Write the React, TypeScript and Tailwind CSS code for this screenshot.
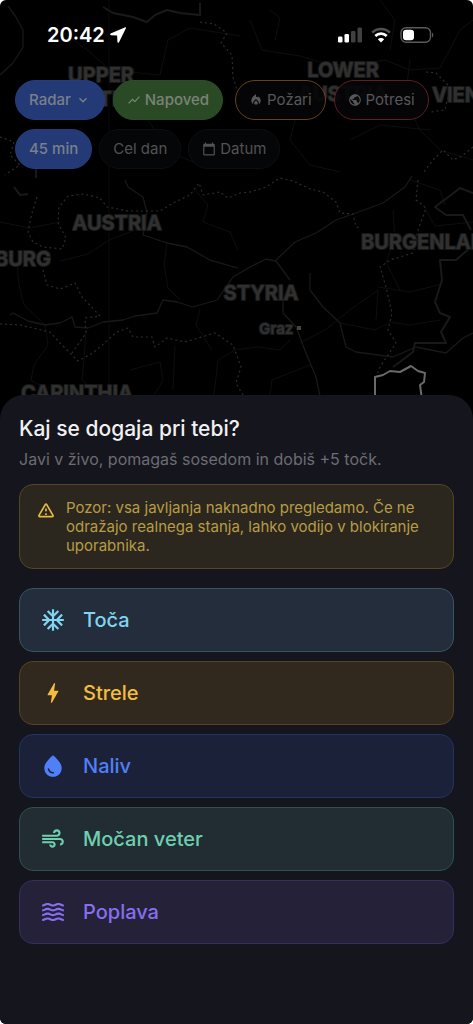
import React from "react";
import {
  MdAcUnit,
  MdAir,
  MdBolt,
  MdCalendarToday,
  MdKeyboardArrowDown,
  MdLocalFireDepartment,
  MdPublic,
  MdShowChart,
  MdWaterDrop,
  MdWaves,
} from "react-icons/md";

const reports = [
  {
    label: "Toča",
    icon: MdAcUnit,
    style: "bg-[#242d3b] border-[#35565f] text-[#81d4f0]",
  },
  {
    label: "Strele",
    icon: MdBolt,
    style: "bg-[#32291e] border-[#54431f] text-[#f3bd42]",
  },
  {
    label: "Naliv",
    icon: MdWaterDrop,
    style: "bg-[#1c213a] border-[#243361] text-[#4f80f7]",
  },
  {
    label: "Močan veter",
    icon: MdAir,
    style: "bg-[#212d33] border-[#2d5150] text-[#6fcfb0]",
  },
  {
    label: "Poplava",
    icon: MdWaves,
    style: "bg-[#252138] border-[#352f5c] text-[#866ff0]",
  },
];

const roads = [
  "M10 315L13 313L28 321L45 325L60 323L72 317L75 327L88 328L103 322L123 320L135 316L157 313L163 300L177 302L193 307L217 300L233 277L250 267L266 259L276 261L290 280",
  "M125 180L128 187L143 197L147 213L143 235L167 243L187 247L210 260L238 268",
  "M276 260L295 242L316 233L336 220L356 213L383 203L405 187L412 176",
  "M310 273L310 290L323 307L340 323L346 347L356 352L393 357L416 347L446 353L463 338L473 333",
  "M283 297L283 313L296 327L306 353L316 377L320 396",
  "M0 75L13 63L23 47L23 30L16 17L8 6",
];

const lanes = [
  "M17 265L19 285L24 305L45 325L48 345L34 365L31 380L45 388",
  "M60 261L88 254L109 240L140 228",
  "M0 222L30 228L60 222",
  "M167 243L164 265L168 288L180 300",
  "M203 222L230 232L238 250M203 222L208 205L195 190",
  "M86 330L84 360L82 380L95 392M130 370L160 362L163 380L154 396",
  "M340 323L375 330L390 322L410 325L440 320",
  "M300 343L325 330L350 310L378 290L376 320M378 287L410 292L442 284",
  "M393 210L395 240L386 262L400 290M425 208L435 226L473 222",
  "M233 350L258 347L280 350L290 340M270 395L272 380L310 365",
  "M60 30L90 52L110 70L160 75L168 40L190 28L240 36",
  "M250 20L262 50L300 56L320 62L350 66L385 60L410 70L440 68L460 30L473 20",
  "M410 60L405 100L420 130L440 150L473 160M350 140L380 125L430 130",
  "M120 100L150 122L165 150L200 165M300 100L290 140L310 165L340 172",
  "M270 10L280 18L275 40M380 0L395 20L390 50M410 180L440 190L445 205",
  "M214 395L218 360L235 350M175 345L173 390M200 309L196 325L212 350",
];

const regionBorders = [
  "M37 197L32 213L28 232L33 242L43 247L62 249L66 238L58 223L59 207L68 196L83 194L100 198L107 207L128 211L160 211L173 203L190 195L199 183L203 195L220 192L228 198L240 193L250 192L266 187L280 178L293 181L310 189L323 192L336 202L340 213L353 214L356 227L361 228",
  "M43 270L47 285L60 289L75 283L82 297L100 316L85 318L86 333L72 353",
  "M0 324L20 325L50 332L60 343L78 361L93 353L117 332L128 328L133 337L152 337L155 347L167 338L185 342L215 333L233 345L241 367L236 383L243 395",
  "M418 180L416 200L426 208L418 230L413 253L390 260L380 267L386 287L392 313L388 330L396 343L380 367L376 377",
  "M200 22L214 24L227 33L221 43L232 55L233 77L237 90",
  "M426 72L436 73L450 87L445 110L430 112",
  "M473 147L462 156L453 160L443 150L433 160L423 173",
  "M0 137L14 142L10 155L20 165L5 175",
];

const stateBorders = [
  "M103 7L113 13L133 17L147 22L155 15L167 10L180 13L200 15L200 3",
  "M473 193L460 188L451 195L435 207L446 215L463 215L471 230",
  "M471 247L456 260L440 260L442 280L435 302L440 313L450 317L441 332L446 343L415 343L413 352L393 367",
  "M14 187L20 195L28 194M24 160L36 165L36 178",
];

const Map = () => {
  return (
    <svg
      className="absolute top-0 left-0 w-full"
      viewBox="0 0 473 420"
      fill="none"
      strokeLinejoin="round"
      aria-hidden="true"
    >
      <path d="M109 0V420" stroke="#0b0b0b" />
      <g stroke="#0e0e0e">
        {lanes.map((d) => (
          <path key={d} d={d} />
        ))}
      </g>
      <g stroke="#181818" strokeWidth="1.3">
        {roads.map((d) => (
          <path key={d} d={d} />
        ))}
      </g>
      <g stroke="#2c2c2c" strokeWidth="1.2" strokeDasharray="2 3">
        {regionBorders.map((d) => (
          <path key={d} d={d} />
        ))}
      </g>
      <g stroke="#191919" strokeWidth="2">
        {stateBorders.map((d) => (
          <path key={d} d={d} />
        ))}
      </g>
      <path
        d="M375 400V377L383 375L390 371L400 372L411 366L418 371L425 373L424 382L420 385L422 400"
        stroke="#6a6a6a"
        strokeWidth="2"
      />
      <g
        className="font-['Inter',sans-serif] text-[20px] font-bold"
        fill="#303030"
        stroke="#181818"
        strokeWidth="2"
        paintOrder="stroke"
      >
        <text x="101" y="82" textAnchor="middle">UPPER</text>
        <text x="101" y="106" textAnchor="middle">AUSTRIA</text>
        <text x="343" y="77" textAnchor="middle">LOWER</text>
        <text x="343" y="101" textAnchor="middle">AUSTRIA</text>
        <text x="432" y="102">VIENNA</text>
        <text x="117" y="230" textAnchor="middle">AUSTRIA</text>
        <text x="51" y="266" textAnchor="end">SALZBURG</text>
        <text x="361" y="249">BURGENLAND</text>
        <text x="261" y="300" textAnchor="middle">STYRIA</text>
        <text x="77" y="400" textAnchor="middle">CARINTHIA</text>
        <text x="259" y="334" className="text-[15px]">Graz</text>
      </g>
      <rect x="297" y="326" width="4" height="4" fill="#444444" />
    </svg>
  );
};

const StatusBar = () => {
  return (
    <div className="flex h-[70px] items-center justify-between pr-[39px] pl-[47px] text-white">
      <div className="flex items-center gap-1">
        <span className="text-xl leading-6 font-semibold">20:42</span>
        <svg className="size-[18px]" viewBox="0 0 18 18" fill="currentColor">
          <path d="M16.4 1.2 1.6 7.6c-.8.4-.6 1.5.3 1.6l6.2.3.3 6.4c.1.9 1.2 1.1 1.6.3l7-14.3c.2-.5-.2-.9-.6-.7Z" />
        </svg>
      </div>
      <div className="flex items-center gap-[9px]">
        <svg className="h-4 w-6" viewBox="0 0 24 16">
          <rect x="0" y="9.5" width="4.5" height="6" rx="1.3" fill="#fff" />
          <rect x="6.5" y="7" width="4.5" height="8.5" rx="1.3" fill="#fff" />
          <rect x="13" y="4" width="4.5" height="11.5" rx="1.3" fill="#404040" />
          <rect x="19.5" y="0.5" width="4.5" height="15" rx="1.3" fill="#404040" />
        </svg>
        <svg className="h-4 w-5" viewBox="0 0 20 16" fill="none" strokeWidth="2.6">
          <path d="M1.2 5.6a12.4 12.4 0 0 1 17.6 0" stroke="#505050" />
          <path d="M4.3 9a8 8 0 0 1 11.4 0" stroke="#fff" />
          <path d="M10 15.6 6.8 12.3a4.6 4.6 0 0 1 6.4 0Z" fill="#fff" />
        </svg>
        <svg className="h-4 w-[34px]" viewBox="0 0 34 16" fill="none">
          <rect x="1" y="0.7" width="29.5" height="14.6" rx="5" stroke="#5a5a5a" strokeWidth="1.4" />
          <rect x="3" y="2.7" width="11" height="10.6" rx="3.2" fill="#fff" />
          <path d="M32 5.5c1.7.8 1.7 4.2 0 5Z" fill="#5a5a5a" />
        </svg>
      </div>
    </div>
  );
};

const chip =
  "flex h-10 shrink-0 items-center gap-1 rounded-full border px-[13px] text-[15px] leading-5 whitespace-nowrap";

const Filters = () => {
  return (
    <div className="flex flex-col gap-[9px] overflow-hidden pt-[10px] pl-[15px]">
      <div className="flex gap-2">
        <button type="button" className={`${chip} border-[#253c7c] bg-[#243a76] font-medium text-[#7a7f8b]`}>
          Radar
          <MdKeyboardArrowDown className="size-4" />
        </button>
        <button type="button" className={`${chip} border-[#2b4f26] bg-[#2a4a25] font-medium text-[#7b8279]`}>
          <MdShowChart className="size-[14px]" />
          Napoved
        </button>
        <button type="button" className={`${chip} ml-1 border-[#69401f] bg-[#050608]/90 text-[#57575a]`}>
          <MdLocalFireDepartment className="size-[14px]" />
          Požari
        </button>
        <button type="button" className={`${chip} border-[#5e1f1f] bg-[#050608]/90 text-[#57575a]`}>
          <MdPublic className="size-[14px]" />
          Potresi
        </button>
      </div>
      <div className="flex gap-[7px]">
        <button type="button" className={`${chip} border-[#253c7c] bg-[#243a76] font-medium text-[#7a7f8b]`}>
          45 min
        </button>
        <button type="button" className={`${chip} border-[#0e0f12] bg-[#050608] text-[#525255]`}>
          Cel dan
        </button>
        <button type="button" className={`${chip} border-[#0e0f12] bg-[#050608] text-[#525255]`}>
          <MdCalendarToday className="size-[14px]" />
          Datum
        </button>
      </div>
    </div>
  );
};

const ReportSheet = () => {
  return (
    <section className="relative flex-1 rounded-t-3xl bg-[#15151e] px-[19px] pt-[21px] pb-20">
      <h1 className="text-[21px] leading-[26px] font-medium text-[#f1f1f2]">Kaj se dogaja pri tebi?</h1>
      <p className="mt-[7px] text-base leading-5 text-[#6c6c72]">
        Javi v živo, pomagaš sosedom in dobiš +5 točk.
      </p>
      <div className="mt-[15px] flex gap-2.5 rounded-[14px] border border-[#55461f] bg-[#2b271f] px-4 py-[13px]">
        <svg className="mt-0.5 size-5 shrink-0 text-[#e6bb3d]" viewBox="0 0 24 24" fill="currentColor">
          <path d="M12 5.99 19.53 19H4.47L12 5.99M2.74 18c-.77 1.33.19 3 1.73 3h15.06c1.54 0 2.5-1.67 1.73-3L13.73 4.99c-.77-1.33-2.69-1.33-3.46 0L2.74 18zM11 11v2c0 .55.45 1 1 1s1-.45 1-1v-2c0-.55-.45-1-1-1s-1 .45-1 1zm0 5h2v2h-2z" />
        </svg>
        <p className="text-[15px] leading-[19px] text-[#b79c45]">
          Pozor: vsa javljanja naknadno pregledamo. Če ne odražajo realnega stanja, lahko vodijo v blokiranje
          uporabnika.
        </p>
      </div>
      <div className="mt-[19px] flex flex-col gap-[9px]">
        {reports.map(({ label, icon: Icon, style }) => (
          <button
            key={label}
            type="button"
            className={`flex h-16 items-center gap-[17px] rounded-[14px] border px-5 text-xl leading-6 font-medium ${style}`}
          >
            <Icon className="size-[26px] shrink-0" />
            {label}
          </button>
        ))}
      </div>
    </section>
  );
};

const App = () => {
  return (
    <div className="bg-white">
      <main className="relative flex min-h-screen flex-col overflow-hidden rounded-md bg-black font-['Inter',sans-serif]">
        <Map />
        <div className="relative h-[395px] shrink-0">
          <StatusBar />
          <Filters />
        </div>
        <ReportSheet />
      </main>
    </div>
  );
};

export default App;
